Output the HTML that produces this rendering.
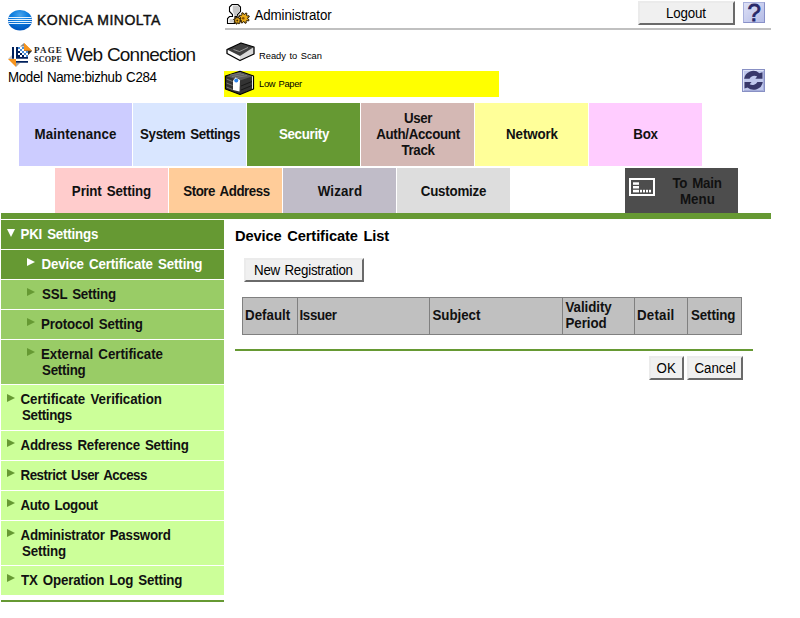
<!DOCTYPE html>
<html><head><meta charset="utf-8">
<style>
html,body{margin:0;padding:0;background:#fff;}
body{width:800px;height:618px;position:relative;overflow:hidden;font-family:"Liberation Sans",Arial,sans-serif;font-size:13.33px;color:#000;}
.abs{position:absolute;}
.nw{white-space:nowrap;}
.tab{position:absolute;width:113px;font-weight:bold;font-size:13.33px;line-height:16px;color:#111;}
.tab span{position:absolute;left:0;width:113px;text-align:center;white-space:nowrap;}
.r1{top:103px;height:63px;}
.r2{top:168px;height:45px;}
.mi{position:absolute;left:1px;width:223px;font-weight:bold;font-size:13.33px;line-height:15px;color:#111;}
.mi span{position:absolute;white-space:nowrap;}
.tri{position:absolute;width:0;height:0;border-style:solid;}
.tr{border-width:4.5px 0 4.5px 8px;border-color:transparent transparent transparent #669933;}
.trw{border-width:4.5px 0 4.5px 8px;border-color:transparent transparent transparent #fff;}
.btn{position:absolute;box-sizing:border-box;background:#f0f0f0;border-style:solid;border-width:2px;border-color:#ebebeb #6a6a6a #6a6a6a #ebebeb;font-size:13.33px;color:#000;}
.btn span{position:absolute;white-space:nowrap;}
#tbl{position:absolute;left:242px;top:297px;border-collapse:separate;border-spacing:0;table-layout:fixed;font-size:13.33px;line-height:15px;}
#tbl th{box-sizing:border-box;height:38px;background:#c0c0c0;border:solid #808080;border-width:1px 0 1px 1px;padding:0 0 3px 3px;font-weight:bold;text-align:left;vertical-align:middle;color:#111;}

/*SY*/
.tab,.mi,#tbl th,#dcl{word-spacing:1.6px;}
#mn,#bnr,#rts,#lp{word-spacing:1px;}
.tab span{transform:scaleY(1.1);transform-origin:0 12px;}
.mi span{transform:scaleY(1.1);transform-origin:0 7.5px;}
#m1,#m2{transform:scaleY(1.06);}
#tbl th #h4{transform:none;position:relative;top:1px;}
#tbl th #h4 b{display:block;height:16px;line-height:16px;transform:scaleY(1.1);transform-origin:0 12px;white-space:nowrap;}
#adm{transform:scaleY(1.1);transform-origin:0 3px;}
#mn{transform:scaleY(1.1);transform-origin:0 12px;}
#tbl th span{display:inline-block;transform:scaleY(1.1);transform-origin:0 3px;}
#bnr{transform:scaleY(1.1);transform-origin:0 3px;}
#blo,#bok,#bca{transform:scaleY(1.1);transform-origin:0 7.5px;}
/*ENDSY*/
/*FIT*/
#km{letter-spacing:0.5px;margin-left:-1.0px;}
#wc{letter-spacing:-0.78px;margin-left:0.0px;}
#mn{letter-spacing:-0.34px;margin-left:0.0px;}
#adm{letter-spacing:-0.11px;margin-left:-0.5px;}
#rts{letter-spacing:-0.02px;margin-left:0.0px;}
#t1{letter-spacing:0.11px;margin-left:0.0px;}
#t2{letter-spacing:-0.36px;margin-left:0.5px;}
#t3{letter-spacing:-0.3px;margin-left:0.5px;}
#t4a{letter-spacing:-0.35px;margin-left:0.5px;}
#t4b{letter-spacing:-0.31px;margin-left:0.5px;}
#t4c{letter-spacing:-0.35px;margin-left:0.5px;}
#t5{letter-spacing:-0.11px;margin-left:0.5px;}
#t6{letter-spacing:-0.25px;margin-left:0.0px;}
#u1{letter-spacing:-0.12px;margin-left:0.0px;}
#u2{letter-spacing:-0.43px;margin-left:1.0px;}
#u3{letter-spacing:0.15px;margin-left:0.5px;}
#u4{letter-spacing:-0.22px;margin-left:0.0px;}
#u5a{letter-spacing:-0.26px;margin-left:0.0px;}
#u5b{letter-spacing:0.09px;margin-left:0.5px;}
#m1{letter-spacing:-0.21px;margin-left:-0.5px;}
#m2{letter-spacing:-0.12px;margin-left:0.5px;}
#m3{letter-spacing:-0.2px;margin-left:0.0px;}
#m4{letter-spacing:-0.18px;margin-left:0.0px;}
#m5a{letter-spacing:-0.06px;margin-left:0.0px;}
#m5b{letter-spacing:-0.24px;margin-left:0.0px;}
#m6a{letter-spacing:-0.04px;margin-left:-0.5px;}
#m6b{letter-spacing:-0.33px;margin-left:0.0px;}
#m7{letter-spacing:-0.22px;margin-left:-0.5px;}
#m8{letter-spacing:-0.48px;margin-left:-0.5px;}
#m9{letter-spacing:-0.33px;margin-left:-0.5px;}
#m10a{letter-spacing:-0.25px;margin-left:-0.5px;}
#m10b{letter-spacing:-0.18px;margin-left:0.0px;}
#m11{letter-spacing:-0.18px;margin-left:0.0px;}
#dcl{letter-spacing:-0.1px;margin-left:0.0px;}
#h1{letter-spacing:0.0px;margin-left:-1.0px;}
#h3{letter-spacing:-0.04px;margin-left:-0.5px;}
#h4{letter-spacing:-0.06px;margin-left:-0.5px;}
#h5{letter-spacing:0.2px;margin-left:-1.0px;}
#h6{letter-spacing:-0.12px;margin-left:0.0px;}
#lp{letter-spacing:-0.3px;margin-left:0.0px;}
#ps1{letter-spacing:1.15px;margin-left:0.0px;}
#ps2{letter-spacing:0.25px;margin-left:-0.5px;}
#blo{letter-spacing:-0.18px;margin-left:-1.0px;}
#bnr{letter-spacing:-0.23px;margin-left:-1.0px;}
#bok{letter-spacing:0.25px;margin-left:-0.5px;}
#bca{letter-spacing:-0.05px;margin-left:-0.5px;}
#h2{letter-spacing:-0.35px;margin-left:-1.5px;}
/*ENDFIT*/
</style></head><body>

<!-- header left -->
<svg class="abs" style="left:4px;top:5px" width="40" height="30" viewBox="0 0 800 600">
<defs><radialGradient id="g1" cx="0.5" cy="0.25" r="0.7"><stop offset="0" stop-color="#4aa4ec"/><stop offset="0.45" stop-color="#1080e0"/><stop offset="1" stop-color="#0058c0"/></radialGradient>
<clipPath id="gc"><ellipse cx="320" cy="305" rx="240" ry="206"/></clipPath></defs>
<ellipse cx="320" cy="305" rx="240" ry="206" fill="url(#g1)"/>
<g clip-path="url(#gc)" fill="#e4f2ff"><rect x="60" y="240" width="520" height="20"/><rect x="60" y="280" width="520" height="20"/><rect x="60" y="320" width="520" height="20"/><rect x="60" y="360" width="520" height="20"/></g>
</svg>
<div class="abs nw" id="km" style="left:38px;top:12px;font-size:14px;line-height:16px;font-weight:normal;-webkit-text-stroke:0.45px #111;color:#111;">KONICA MINOLTA</div>

<svg class="abs" style="left:4px;top:40px" width="40" height="30" viewBox="0 0 800 600">
<polygon points="320,130 400,60 400,130" fill="#8a8a8a"/>
<polygon points="400,60 560,215 400,215" fill="#f7941d"/>
<polygon points="480,300 560,215 480,215" fill="#333"/>
<polygon points="80,380 160,300 160,380" fill="#c8c8c8"/>
<polygon points="240,540 320,460 240,460" fill="#a8a8a8"/>
<polygon points="80,380 240,380 240,540" fill="#f7941d"/>
<rect x="160" y="140" width="40" height="235" fill="#00205c"/>
<rect x="240" y="140" width="240" height="235" fill="#00205c"/>
<g fill="#fff"><rect x="320" y="140" width="40" height="40"/><rect x="280" y="180" width="40" height="40"/><rect x="360" y="180" width="40" height="40"/><rect x="320" y="220" width="40" height="40"/><rect x="400" y="220" width="40" height="40"/><rect x="280" y="260" width="40" height="40"/><rect x="360" y="260" width="40" height="40"/><rect x="440" y="260" width="40" height="40"/><rect x="320" y="300" width="40" height="40"/><rect x="400" y="300" width="40" height="40"/></g>
<g fill="#4a90d8"><rect x="280" y="140" width="40" height="40"/><rect x="360" y="140" width="40" height="40"/><rect x="320" y="180" width="40" height="40"/><rect x="360" y="220" width="40" height="40"/><rect x="440" y="220" width="40" height="40"/><rect x="400" y="260" width="40" height="40"/><rect x="440" y="300" width="40" height="40"/></g>
<polygon points="400,60 560,215 400,215" fill="#f7941d"/>
<polygon points="480,300 560,215 480,215" fill="#333"/>
<rect x="240" y="420" width="240" height="35" fill="#00205c"/>
</svg>
<div class="abs nw" id="ps1" style="font-family:'Liberation Serif',serif;left:34px;top:46px;font-size:9px;line-height:9px;font-weight:bold;color:#222;">PAGE</div>
<div class="abs nw" id="ps2" style="font-family:'Liberation Serif',serif;transform-origin:0 0;transform:scaleX(0.9);left:34px;top:54.5px;font-size:9px;line-height:9px;font-weight:bold;color:#222;">SCOPE</div>
<div class="abs nw" id="wc" style="left:66px;top:43px;font-size:19px;line-height:24px;color:#111;">Web Connection</div>
<div class="abs nw" id="mn" style="left:8px;top:70px;font-size:13.33px;line-height:16px;color:#000;">Model Name:bizhub C284</div>

<!-- header right -->
<svg class="abs" style="left:222px;top:0px" width="40" height="30" viewBox="0 0 800 600">
<path d="M200,90 L320,90 L370,140 L370,230 L310,290 L300,330 L260,330 L260,470 L110,470 L110,370 L150,330 L210,330 L210,290 L150,230 L150,140 Z" fill="#fff" stroke="#000" stroke-width="22" stroke-linejoin="miter"/>
<path d="M215,110 L315,110 L355,150 L355,225 L300,280 L290,320 L250,320 L240,280 L215,230 Z" fill="#c8c8c8"/>
<rect x="150" y="380" width="80" height="70" fill="#d0d0d0"/>
<g fill="#e8ac1c" stroke="#2a1a00" stroke-width="20" stroke-linejoin="round"><path d="M513,375 L542,396 L530,420 L495,410 L481,422 L486,458 L461,466 L444,434 L425,433 L404,462 L380,450 L390,415 L378,401 L342,406 L334,381 L366,364 L367,345 L338,324 L350,300 L385,310 L399,298 L394,262 L419,254 L436,286 L455,287 L476,258 L500,270 L490,305 L502,319 L538,314 L546,339 L514,356 Z"/><path d="M358,408 L383,419 L378,437 L351,433 L343,443 L354,469 L337,478 L320,456 L308,458 L297,483 L279,478 L283,451 L273,443 L247,454 L238,437 L260,420 L258,408 L233,397 L238,379 L265,383 L273,373 L262,347 L279,338 L296,360 L308,358 L319,333 L337,338 L333,365 L343,373 L369,362 L378,379 L356,396 Z"/></g>
<circle cx="425" cy="365" r="26" fill="#8a5200"/><circle cx="305" cy="408" r="20" fill="#4a2e00"/>
</svg>
<div class="abs nw" id="adm" style="left:255px;top:7px;font-size:13.33px;line-height:16px;">Administrator</div>
<div class="abs" style="left:225px;top:28px;width:546px;height:2px;background:#c0c0c0;"></div>

<div class="btn" id="logout" style="left:638px;top:1px;width:97px;height:24px;"><span id="blo" style="left:27px;top:3px;line-height:16px;">Logout</span></div>
<div class="abs" id="help" style="left:743px;top:2px;width:22px;height:21px;box-sizing:border-box;background:linear-gradient(135deg,#dde0f6,#b4bce6);border:1px solid;border-color:#a8b0dc #8890c8 #8890c8 #a8b0dc;color:#282868;font-size:24px;line-height:24px;overflow:hidden;"><span id="q" style="position:absolute;left:3.5px;top:-2.5px;-webkit-text-stroke:0.8px #282868;">?</span></div>

<svg class="abs" style="left:222px;top:38px" width="40" height="30" viewBox="0 0 800 600">
<polygon points="100,230 360,360 360,450 100,310" fill="#fff"/>
<polygon points="360,360 640,180 640,320 360,450" fill="#d8d8d8"/>
<polygon points="100,230 380,100 640,180 360,360" fill="#404040"/>
<path d="M100,230 L380,100 L640,180 L640,320 L360,450 L100,310 Z" fill="none" stroke="#000" stroke-width="26" stroke-linejoin="round"/>
<path d="M230,230 L350,270 L520,190" fill="none" stroke="#bbb" stroke-width="14"/>
</svg>
<div class="abs nw" id="rts" style="left:259px;top:50px;font-size:9.33px;line-height:12px;">Ready to Scan</div>

<div class="abs" style="left:224px;top:71px;width:275px;height:26px;background:#ffff00;"></div>
<svg class="abs" style="left:220px;top:68px" width="40" height="30" viewBox="0 0 800 600">
<path d="M400,65 L670,160 L670,420 L400,530 L110,420 L110,160 Z" fill="#333" stroke="#000" stroke-width="24" stroke-linejoin="round"/>
<polygon points="400,80 650,165 400,250 130,165" fill="#5a5a5a"/>
<path d="M200,140 L420,100 M240,170 L480,125 M300,195 L540,150" stroke="#8a8a8a" stroke-width="14"/>
<path d="M130,220 L250,270 M130,300 L250,350 M130,380 L250,430" stroke="#888" stroke-width="16"/>
<path d="M420,360 L640,270 M420,440 L640,350" stroke="#111" stroke-width="16"/>
<polygon points="260,250 310,190 400,240 390,470 260,440" fill="#fff"/>
<circle cx="325" cy="250" r="40" fill="#2a80e8"/>
<rect x="640" y="165" width="20" height="250" fill="#e8e8e8"/>
</svg>
<div class="abs nw" id="lp" style="left:259px;top:78px;font-size:9.33px;line-height:12px;">Low Paper</div>

<svg class="abs" style="left:730px;top:60px" width="50" height="38" viewBox="0 0 800 608">
<rect x="200" y="152" width="352" height="352" fill="#c0c8ec" stroke="#8890c4" stroke-width="16"/>
<path d="M216,488 L216,168 L536,168" fill="none" stroke="#e4e8fa" stroke-width="14"/><path d="M536,176 L536,488 L224,488" fill="none" stroke="#a4acd8" stroke-width="14"/>
<g fill="#38386a">
<path d="M225,300 A150,150 0 0 1 470,210 L520,195 L520,300 L405,300 L435,262 A88,88 0 0 0 312,300 Z"/>
<path d="M525,350 A150,150 0 0 1 280,440 L232,455 L232,350 L345,350 L315,388 A88,88 0 0 0 438,350 Z"/>
</g>
</svg>

<!-- tabs row 1 -->
<div class="tab r1" style="left:19px;background:#ccccff;"><span id="t1" style="top:24px;">Maintenance</span></div>
<div class="tab r1" style="left:133px;background:#d9e6ff;"><span id="t2" style="top:24px;">System Settings</span></div>
<div class="tab r1" style="left:247px;background:#669933;color:#fff;"><span id="t3" style="top:24px;">Security</span></div>
<div class="tab r1" style="left:361px;background:#d4b8b4;"><span id="t4a" style="top:8px;">User</span><span id="t4b" style="top:24px;">Auth/Account</span><span id="t4c" style="top:40px;">Track</span></div>
<div class="tab r1" style="left:475px;background:#ffff99;"><span id="t5" style="top:24px;">Network</span></div>
<div class="tab r1" style="left:589px;background:#ffccff;"><span id="t6" style="top:24px;">Box</span></div>
<!-- tabs row 2 -->
<div class="tab r2" style="left:55px;background:#ffcccc;"><span id="u1" style="top:16px;">Print Setting</span></div>
<div class="tab r2" style="left:169px;background:#ffcc99;"><span id="u2" style="top:16px;">Store Address</span></div>
<div class="tab r2" style="left:283px;background:#c0bcc8;"><span id="u3" style="top:16px;">Wizard</span></div>
<div class="tab r2" style="left:397px;background:#dddddd;"><span id="u4" style="top:16px;">Customize</span></div>
<div class="tab r2" id="tmm" style="left:625px;background:#4d4d4d;"><span id="u5a" style="left:43px;width:58px;top:8px;">To Main</span><span id="u5b" style="left:43px;width:58px;top:24px;">Menu</span>
<svg class="abs" style="left:4px;top:10px" width="26" height="18" viewBox="0 0 26 18"><rect x="1" y="1" width="24" height="16" fill="none" stroke="#fff" stroke-width="2"/><g fill="#fff"><rect x="4" y="4.3" width="6" height="2.5"/><rect x="4" y="8" width="6" height="2.5"/><rect x="4" y="11.8" width="6" height="2.6"/><rect x="11" y="11.8" width="2" height="2.6"/><rect x="14" y="11.8" width="2" height="2.6"/><rect x="17" y="11.8" width="2" height="2.6"/><rect x="20" y="11.8" width="2" height="2.6"/></g></svg>
</div>

<div class="abs" style="left:1px;top:213px;width:770px;height:6px;background:#669933;"></div>

<!-- left menu -->
<div id="menu">
<div class="mi" style="top:220px;height:29px;background:#669933;color:#fff;"><i class="tri" style="left:6px;top:9px;border-width:8px 4.5px 0 4.5px;border-color:#fff transparent transparent transparent;"></i><span id="m1" style="left:20px;top:7px;">PKI Settings</span></div>
<div class="mi" style="top:250px;height:29px;background:#669933;color:#fff;"><i class="tri trw" style="left:26px;top:8px;"></i><span id="m2" style="left:40px;top:7px;">Device Certificate Setting</span></div>
<div class="mi" style="top:280px;height:29px;background:#99cc66;"><i class="tri tr" style="left:26px;top:8px;"></i><span id="m3" style="left:41px;top:7px;">SSL Setting</span></div>
<div class="mi" style="top:310px;height:29px;background:#99cc66;"><i class="tri tr" style="left:26px;top:8px;"></i><span id="m4" style="left:40px;top:7px;">Protocol Setting</span></div>
<div class="mi" style="top:340px;height:44px;background:#99cc66;"><i class="tri tr" style="left:26px;top:8px;"></i><span id="m5a" style="left:40px;top:7px;">External Certificate</span><span id="m5b" style="left:41px;top:23px;">Setting</span></div>
<div class="mi" style="top:385px;height:45px;background:#ccff99;"><i class="tri tr" style="left:6px;top:9px;"></i><span id="m6a" style="left:20px;top:7px;">Certificate Verification</span><span id="m6b" style="left:21px;top:23px;">Settings</span></div>
<div class="mi" style="top:431px;height:29px;background:#ccff99;"><i class="tri tr" style="left:6px;top:8px;"></i><span id="m7" style="left:20px;top:7px;">Address Reference Setting</span></div>
<div class="mi" style="top:461px;height:29px;background:#ccff99;"><i class="tri tr" style="left:6px;top:8px;"></i><span id="m8" style="left:20px;top:7px;">Restrict User Access</span></div>
<div class="mi" style="top:491px;height:29px;background:#ccff99;"><i class="tri tr" style="left:6px;top:8px;"></i><span id="m9" style="left:20px;top:7px;">Auto Logout</span></div>
<div class="mi" style="top:521px;height:44px;background:#ccff99;"><i class="tri tr" style="left:6px;top:8px;"></i><span id="m10a" style="left:20px;top:7px;">Administrator Password</span><span id="m10b" style="left:21px;top:23px;">Setting</span></div>
<div class="mi" style="top:566px;height:29px;background:#ccff99;"><i class="tri tr" style="left:6px;top:8px;"></i><span id="m11" style="left:20px;top:7px;">TX Operation Log Setting</span></div>
</div>
<div class="abs" style="left:1px;top:600px;width:223px;height:2px;background:#669933;"></div>

<!-- content -->
<div class="abs nw" id="dcl" style="left:235px;top:227px;font-weight:bold;font-size:14.67px;line-height:18px;">Device Certificate List</div>
<div class="btn" id="newreg" style="left:244px;top:258px;width:120px;height:24px;"><span id="bnr" style="left:9px;top:2px;line-height:16px;">New Registration</span></div>

<table id="tbl"><tr>
<th style="width:55px;"><span id="h1">Default</span></th>
<th style="width:132px;"><span id="h2">Issuer</span></th>
<th style="width:133px;"><span id="h3">Subject</span></th>
<th style="width:72px;"><span id="h4"><b>Validity</b><b>Period</b></span></th>
<th style="width:53px;"><span id="h5">Detail</span></th>
<th style="width:55px;border-right-width:1px;"><span id="h6">Setting</span></th>
</tr></table>

<div class="abs" style="left:235px;top:349px;width:518px;height:2px;background:#669933;"></div>
<div class="btn" id="ok" style="left:649px;top:356px;width:35px;height:24px;"><span id="bok" style="left:6px;top:3px;line-height:16px;">OK</span></div>
<div class="btn" id="cancel" style="left:687px;top:356px;width:56px;height:24px;"><span id="bca" style="left:6px;top:3px;line-height:16px;">Cancel</span></div>

</body></html>
